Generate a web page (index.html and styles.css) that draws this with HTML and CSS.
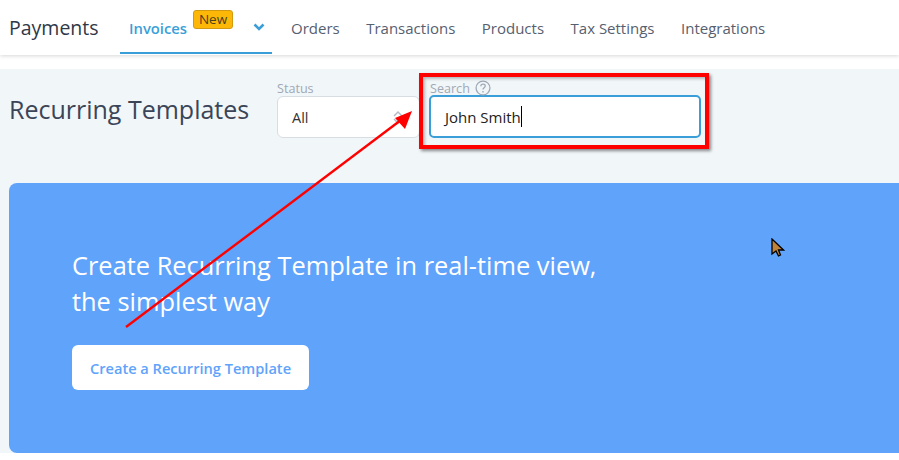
FILE: index.html
```html
<!DOCTYPE html>
<html lang="en">
<head>
    <meta charset="UTF-8">
    <meta name="viewport" content="width=device-width, initial-scale=1.0">
    <title>Recurring Templates</title>
    <link rel="stylesheet" href="styles.css">
</head>
<body>
    <header class="nav">
        <div class="brand">Payments</div>
        <div class="tab">
            <span class="tab-name">Invoices</span>
            <span class="badge">New</span>
            <svg class="chev" width="12" height="8" viewBox="0 0 12 8"><path d="M1.500 1.500 6 6l4.500-4.500" fill="none" stroke="#3a9fd8" stroke-width="2.600"/></svg>
        </div>
        <a class="link">Orders</a>
        <a class="link">Transactions</a>
        <a class="link">Products</a>
        <a class="link">Tax Settings</a>
        <a class="link">Integrations</a>
    </header>
    <main class="content">
        <div class="top">
            <h1 class="title">Recurring Templates</h1>
            <div class="field status">
                <label>Status</label>
                <div class="select">
                    <span>All</span>
                    <svg width="10" height="14" viewBox="0 0 10 14"><path d="M1 6 5 2l4 4M1 9l4 4 4-4" fill="none" stroke="#b5bcc6" stroke-width="1.500"/></svg>
                </div>
            </div>
            <div class="field search">
                <label>Search
                    <svg class="help" width="16" height="16" viewBox="0 0 15 15"><circle cx="7.500" cy="7.500" r="6.500" fill="none" stroke="#a0a8b5" stroke-width="1.200"/><path d="M5.500 5.800c0-2.600 4.100-2.600 4.100-.1 0 1.600-2.100 1.500-2.100 3.200" fill="none" stroke="#a0a8b5" stroke-width="1.200"/><circle cx="7.500" cy="11" r=".8" fill="#a0a8b5"/></svg>
                </label>
                <div class="input"><span>John Smith</span><i class="caret"></i></div>
            </div>
        </div>
        <section class="hero">
            <h2>Create Recurring Template in real-time view,<br>the simplest way</h2>
            <button class="create">Create a Recurring Template</button>
        </section>
    </main>

    <!-- annotations drawn over the screenshot -->
    <div class="mark"></div>
    <svg class="arrow" width="899" height="460" viewBox="0 0 899 460">
        <line x1="126" y1="327" x2="401" y2="120" stroke="#f00" stroke-width="2.400"/>
        <polygon points="412,111 395,118 405,129" fill="#f00"/>
    </svg>
    <svg class="pointer" width="14" height="20" viewBox="0 0 14 20">
        <path d="M1 1v15l4-3 2.500 5 2-1-2-5h5z" fill="#c08238" stroke="#000" stroke-width="1.300"/>
    </svg>
</body>
</html>
```
FILE: styles.css
```css
body{
    margin: 0;
    height: 460px;
    overflow: hidden;
    background-color: #fff;
    font-family: "Open Sans", "Noto Sans", sans-serif;
}
.nav{
    height: 55px;
    display: flex;
    align-items: center;
    padding-left: 9px;
    background-color: #fff;
    box-shadow: 0 1px 4px rgba(0,0,0,.16);
}
.brand{
    width: 111px;
    font-size: 19.500px;
    color: #2f3847;
}
.tab{
    position: relative;
    width: 152px;
    height: 53px;
    margin-right: 19px;
    box-sizing: border-box;
    border-bottom: 2px solid #3a9fd8;
    padding: 18px 0 0 9px;
    color: #3a9fd8;
    font-size: 14.800px;
    font-weight: 600;
    line-height: 18px;
}
.badge{
    position: absolute;
    top: 9px;
    left: 73px;
    width: 38px;
    height: 17px;
    text-align: center;
    line-height: 17px;
    font-size: 13.500px;
    font-weight: 400;
    color: #4a4020;
    background-color: #fdb706;
    border: 1px solid #d19a10;
    border-radius: 3px;
}
.chev{
    position: absolute;
    top: 22px;
    left: 133px;
}
.link{
    margin-right: 26.500px;
    padding-top: 1px;
    font-size: 15px;
    font-weight: 500;
    color: #56606f;
}
.content{
    height: 384px;
    margin-top: 14px;
    background-color: #f1f6f9;
    padding-left: 9px;
}
.top{
    display: flex;
    height: 114px;
}
.title{
    width: 268px;
    margin: 25px 0 0;
    font-size: 25px;
    font-weight: 400;
    line-height: 30px;
    color: #3b4558;
}
.field label{
    display: flex;
    align-items: center;
    gap: 5px;
    height: 15px;
    margin-top: 12px;
    font-size: 12.600px;
    color: #a0a8b5;
}
.help{
    margin-top: -2px;
}
.status{
    width: 143px;
    margin-right: 9px;
}
.search{
    width: 272px;
}
.search label{
    padding-left: 1px;
}
.select{
    display: flex;
    align-items: center;
    justify-content: space-between;
    height: 42px;
    box-sizing: border-box;
    padding: 0 16px 0 14px;
    background-color: #fff;
    border: 1px solid #d8dde3;
    border-radius: 6px;
    font-size: 14.500px;
    color: #333;
}
.input{
    display: flex;
    align-items: center;
    height: 43px;
    box-sizing: border-box;
    margin-top: -1px;
    padding-left: 14px;
    background-color: #fff;
    border: 2px solid #3a9fd8;
    border-radius: 5px;
    font-size: 15px;
    color: #222;
}
.caret{
    width: 1px;
    height: 21px;
    background-color: #000;
}
.hero{
    height: 270px;
    box-sizing: border-box;
    padding: 64px 0 0 63px;
    background-color: #60a3fb;
    border-radius: 8px 0 0 8px;
}
.hero h2{
    margin: 0 0 26px;
    font-size: 25.400px;
    font-weight: 400;
    line-height: 36px;
    color: #fff;
}
.create{
    display: block;
    width: 237px;
    height: 45px;
    padding: 0;
    border: none;
    border-radius: 6px;
    background-color: #fff;
    color: #60a3fb;
    font-family: inherit;
    font-size: 14.600px;
    font-weight: 600;
}
.mark{
    position: absolute;
    left: 419px;
    top: 73px;
    width: 290px;
    height: 76px;
    box-sizing: border-box;
    border: 4px solid #f00;
    box-shadow: 2px 2px 3px rgba(0,0,0,.45), inset 2px 2px 3px rgba(0,0,0,.25);
}
.arrow{
    position: absolute;
    left: 0;
    top: 0;
}
.pointer{
    position: absolute;
    left: 771px;
    top: 238px;
}
```
